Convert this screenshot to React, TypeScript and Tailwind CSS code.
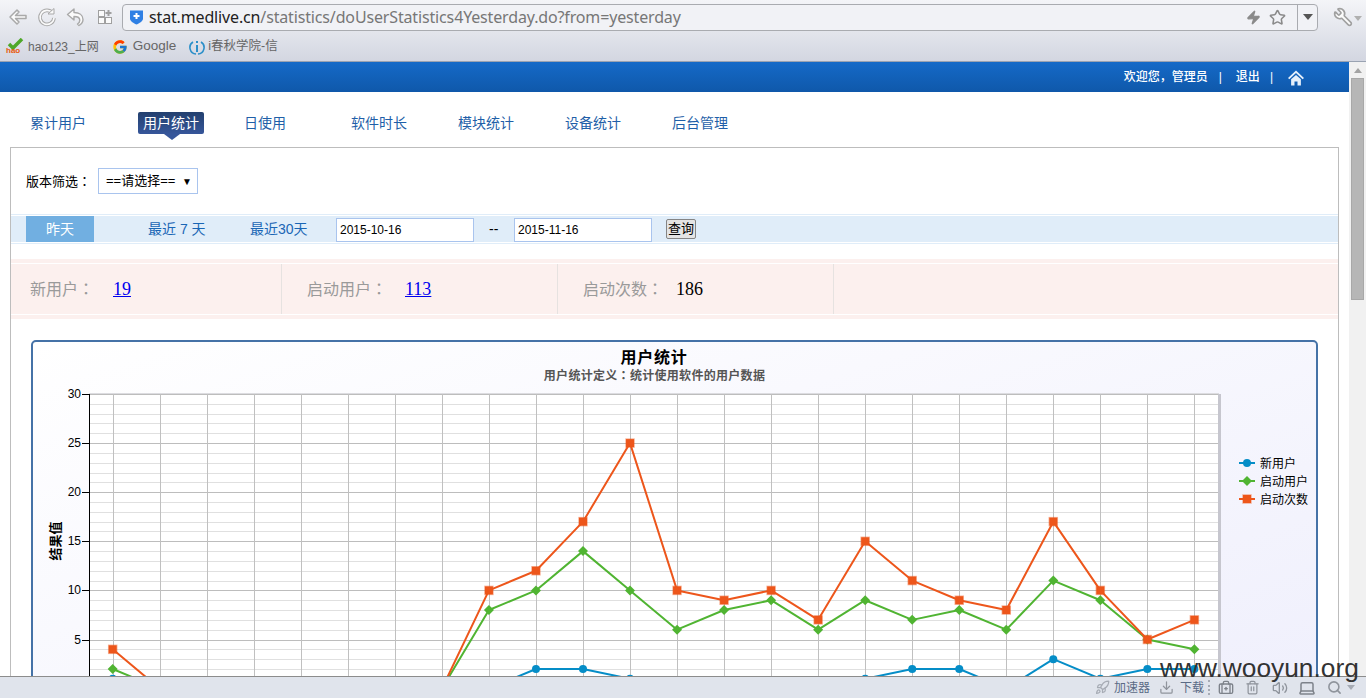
import { BriefcaseMedical, Download, Laptop, Rocket, Search, Trash2, Volume2, Zap, Star, Wrench } from 'lucide-react';
import { FcGoogle } from 'react-icons/fc';

const CJK = "[font-family:'Liberation_Sans','Noto_Sans_CJK_SC',sans-serif]";

const NAV = ['累计用户', '用户统计', '日使用', '软件时长', '模块统计', '设备统计', '后台管理'];

const SERIES = [
  { name: '新用户', color: '#058dc7', marker: 'circle', data: [1, 0, 0, 0, 0, 0, 0, 0, 0, 2, 2, 1, 0, 0, 0, 0, 1, 2, 2, 0, 3, 1, 2, 2] },
  { name: '启动用户', color: '#50b432', marker: 'diamond', data: [2, 0, 0, 0, 0, 0, 0, 0, 8, 10, 14, 10, 6, 8, 9, 6, 9, 7, 8, 6, 11, 9, 5, 4] },
  { name: '启动次数', color: '#ed561b', marker: 'square', data: [4, 0, 0, 0, 0, 0, 0, 0, 10, 12, 17, 25, 10, 9, 10, 7, 15, 11, 9, 8, 17, 10, 5, 7] },
];

const px = (i: number) => 112.7 + i * 47.03;
const py = (v: number) => 688.6 - v * 9.82;
// grid lines sit on whole pixels, otherwise they blur
const snap = (n: number) => Math.round(n) + 0.5;

function Marker({ kind, x, y, color }: { kind: string; x: number; y: number; color: string }) {
  if (kind === 'circle') return <circle cx={x} cy={y} r={4} fill={color} />;
  if (kind === 'diamond') return <path d={`M${x} ${y - 5}L${x + 5} ${y}L${x} ${y + 5}L${x - 5} ${y}Z`} fill={color} />;
  return <rect x={x - 4} y={y - 4} width={8} height={8} fill={color} stroke={color} strokeOpacity={0.45} strokeWidth={1.5} />;
}

function Colon() {
  return <span className="[font-family:'Noto_Sans_CJK_TC',sans-serif]">：</span>;
}

function Chart() {
  const font = "'Liberation Sans','Noto Sans CJK SC',sans-serif";
  return (
    <svg viewBox="33 342 1283 420" width={1283} height={420} fontFamily={font} className="block">
      <text x={654} y={363} textAnchor="middle" fontSize={16} letterSpacing={0.7} fontWeight={700} fill="#000">用户统计</text>
      <text x={654.5} y={380} textAnchor="middle" fontSize={12} letterSpacing={0.3} fontWeight={700} fill="#555">
        用户统计定义<tspan fontFamily="'Noto Sans CJK TC',sans-serif">：</tspan>统计使用软件的用户数据
      </text>
      <rect x={1218} y={394} width={3} height={320} fill="#c6c6ce" />
      <rect x={89} y={393} width={1130} height={1} fill="#dcdce0" />
      <rect x={89} y={394} width={1129} height={320} fill="#fff" />
      {Array.from({ length: 31 }, (_, v) => (
        <line key={v} x1={89} x2={1218} y1={snap(py(v))} y2={snap(py(v))} stroke={v % 5 === 0 ? '#bdbdbd' : '#e0e0e0'} strokeWidth={1} />
      ))}
      {SERIES[0].data.map((_, i) => (
        <line key={i} x1={snap(px(i))} x2={snap(px(i))} y1={394} y2={714} stroke="#c0c0c0" strokeWidth={1} />
      ))}
      <line x1={89.5} x2={89.5} y1={394} y2={714} stroke="#000" strokeWidth={1} />
      {[30, 25, 20, 15, 10, 5].map((v) => (
        <g key={v}>
          <line x1={82} x2={89} y1={snap(py(v))} y2={snap(py(v))} stroke="#000" strokeWidth={1} />
          <text x={81} y={py(v) + 4} textAnchor="end" fontSize={12} fill="#000">{v}</text>
        </g>
      ))}
      <text transform="translate(60 541) rotate(-90)" textAnchor="middle" fontSize={13} fontWeight={700} fill="#000">结果值</text>
      {SERIES.map((s) => (
        <g key={s.name}>
          <polyline points={s.data.map((v, i) => `${px(i)},${py(v)}`).join(' ')} fill="none" stroke={s.color} strokeWidth={2} strokeLinejoin="round" />
          {s.data.map((v, i) => <Marker key={i} kind={s.marker} x={px(i)} y={py(v)} color={s.color} />)}
        </g>
      ))}
      {SERIES.map((s, i) => (
        <g key={s.name}>
          <line x1={1239} x2={1255} y1={463 + i * 18} y2={463 + i * 18} stroke={s.color} strokeWidth={2} />
          <Marker kind={s.marker} x={1247} y={463 + i * 18} color={s.color} />
          <text x={1260} y={467.5 + i * 18} fontSize={12} fill="#000">{s.name}</text>
        </g>
      ))}
    </svg>
  );
}

function BrowserBar() {
  return (
    <div className="h-[62px] shrink-0 bg-linear-to-b from-[#f4f5f8] to-[#d3d6e1] border-b border-[#9aa3b2]">
      <div className="h-[34px] flex items-center pl-[8px]">
        <svg width="20" height="20" viewBox="0 0 20 20" fill="#fbfbfb" stroke="#a9a9a9" strokeWidth="1.5" strokeLinejoin="round">
          <path d="M2 10l7-7 2 2-3.5 3.5H18v3H7.5L11 15l-2 2z" />
        </svg>
        <svg width="20" height="20" viewBox="0 0 20 20" fill="none" className="ml-[9px]">
          <path d="M15.5 6a7 7 0 1 0 1.5 5" stroke="#a9a9a9" strokeWidth="3.6" />
          <path d="M15.5 6a7 7 0 1 0 1.5 5" stroke="#fbfbfb" strokeWidth="1.6" />
          <path d="M11 7h6V1.5z" fill="#fbfbfb" stroke="#a9a9a9" strokeLinejoin="round" />
        </svg>
        <svg width="20" height="20" viewBox="0 0 20 20" fill="#fbfbfb" stroke="#a9a9a9" strokeWidth="1.4" strokeLinejoin="round" className="ml-[9px]">
          <path d="M1.5 7.5L8 2v3.5c5 0 9 2.500 9 7 0 2.500-1.500 4.500-4 6l-1.500-1.500c1.500-1 2.300-2.300 2.300-3.800 0-2.500-2.800-3.700-5.800-3.700V13z" />
        </svg>
        <svg width="16" height="16" viewBox="0 0 16 16" fill="#fbfbfb" stroke="#a0a0a0" className="ml-[11px]">
          <rect x="1.500" y="1.500" width="6" height="6" /><rect x="1.500" y="8.500" width="6" height="6" /><rect x="8.500" y="8.500" width="6" height="6" />
          <path d="M11.500 1v6M8.500 4h6" strokeWidth="2" />
        </svg>
        <div className="ml-[9px] w-[1196px] h-[27px] rounded-[4px] border border-[#a9abb0] bg-[#f1f2f6] flex items-center pl-[6px]">
          <svg width="15" height="16" viewBox="0 0 15 16">
            <path d="M1 1.500h13v8c0 2.500-3 4.500-6.500 6C4 14 1 12 1 9.500z" fill="#2f80e4" />
            <path d="M7.500 4v6M4.500 7h6" stroke="#fff" strokeWidth="2" />
          </svg>
          <div className="ml-[5px] text-[16px] whitespace-nowrap [font-family:'Noto_Sans',sans-serif] tracking-[-0.15px] text-[#222]">
            stat.medlive.cn<span className="text-[#777]">/statistics/doUserStatistics4Yesterday.do?from=yesterday</span>
          </div>
          <div className="ml-auto flex items-center h-full">
            <Zap size={15} fill="#8a8a8a" stroke="#8a8a8a" />
            <Star size={17} stroke="#8a8a8a" strokeWidth={2.2} className="ml-[8px] mr-[11px]" />
            <div className="h-full w-[20px] border-l border-[#a9abb0] flex items-center justify-center">
              <div className="w-0 h-0 border-x-[5px] border-x-transparent border-t-[6px] border-t-[#555]" />
            </div>
          </div>
        </div>
        <Wrench size={20} fill="#fbfbfb" stroke="#a0a0a0" className="ml-[15px] -scale-x-100" />
        <div className="ml-[1px] mt-[3px] w-0 h-0 border-x-[4px] border-x-transparent border-t-[5px] border-t-[#b0b0b0]" />
      </div>
      <div className={`h-[25px] flex items-center pl-[6px] text-[12px] text-[#666] ${CJK}`}>
        <div className="relative w-[19px] h-[17px]">
          <svg width="17" height="12" viewBox="0 0 17 12" className="absolute left-[1px] top-0">
            <path d="M2 6l4 4L15 1" fill="none" stroke="#4fa82a" strokeWidth="3.5" />
          </svg>
          <span className="absolute left-0 top-[8px] text-[8px] leading-[9px] font-bold text-[#e8590c]">hao</span>
        </div>
        <span className="ml-[3px]">hao123_上网</span>
        <FcGoogle size={16} className="ml-[13px]" />
        <span className="ml-[5px] text-[13.5px]">Google</span>
        <svg width="16" height="16" viewBox="0 0 16 16" className="ml-[13px]" fill="none" stroke="#2b8fc9">
          <path d="M4 3a6.500 6.500 0 0 0 3 12M12 3a6.500 6.500 0 0 1-3 12" strokeWidth="1.600" />
          <path d="M8 6v7" strokeWidth="2" /><path d="M8 2v2" strokeWidth="2" />
        </svg>
        <span className="ml-[3px] text-[12.5px]">i春秋学院-信</span>
      </div>
    </div>
  );
}

function PageHeader() {
  return (
    <div className="h-[30px] bg-linear-to-b from-[#156ac8] to-[#0f58aa] flex items-center justify-end text-white text-[12px] font-medium pr-[45px]">
      <span>欢迎您，管理员</span>
      <span className="ml-[11px] font-normal">|</span>
      <span className="ml-[14px]">退出</span>
      <span className="ml-[10px] font-normal">|</span>
      <svg width="16" height="16" viewBox="0 0 18 17" className="ml-[15px] mt-[2px]" fill="#e6f0fb">
        <path d="M9 0L0 8.500l1.500 1.500L9 3l7.500 7L18 8.500z" />
        <path d="M3.500 10L9 5l5.500 5v7h-3.800v-4.500H7.300V17H3.500z" />
      </svg>
    </div>
  );
}

function Filters() {
  return (
    <>
      <div className="pt-[20px] pl-[15px] flex items-center h-[46px] text-[13px] text-black">
        <span className="w-[72px]">版本筛选<Colon /></span>
        <div className="w-[100px] h-[26px] border border-[#a9c4ee] bg-white flex items-center pl-[7px] pr-[5px] justify-between">
          <span>==请选择==</span>
          <span className="text-[10px]">▼</span>
        </div>
      </div>
      <div className="mt-[20px] border-y border-[#e0edf9] py-px">
        <div className="h-[26px] bg-[#e0edf9] flex pl-[15px] text-[14px] text-[#1a66b5]">
          <div className="w-[68px] bg-[#71afe1] text-white flex items-center justify-center">昨天</div>
          <a className="ml-[54px] w-[59px] leading-[26px] whitespace-nowrap">最近 7 天</a>
          <a className="ml-[43px] w-[59px] leading-[26px] whitespace-nowrap">最近30天</a>
          <div className="ml-[27px] mt-[2px] w-[138px] h-[24px] border border-[#a9c4ee] bg-white pl-[3px] text-[12px] leading-[23px] text-black">2015-10-16</div>
          <div className="w-[40px] pl-[15px] text-black leading-[26px]">--</div>
          <div className="mt-[2px] w-[138px] h-[24px] border border-[#a9c4ee] bg-white pl-[3px] text-[12px] leading-[23px] text-black">2015-11-16</div>
          <div className="ml-[14px] mt-[3px] w-[30px] h-[20px] border border-[#858585] rounded-[2px] bg-[#e4e4e4] text-[13px] leading-[18px] text-center text-black">查询</div>
        </div>
      </div>
    </>
  );
}

function Stats() {
  return (
    <div className="mt-[15px] border-y-4 border-[#fcf0ee] py-px">
      <div className="h-[50px] bg-[#fcf0ee] flex items-center text-[16px] text-[#9a9a9a]">
        <div className="w-[271px] h-full border-r border-[#e6e2e0] flex items-center pl-[19px]">
          <span className="w-[83px]">新用户<Colon /></span>
          <a className="text-[18px] [font-family:'Liberation_Serif',serif] text-[#0000ee] underline">19</a>
        </div>
        <div className="w-[276px] h-full border-r border-[#e6e2e0] flex items-center pl-[25px]">
          <span className="w-[98px]">启动用户<Colon /></span>
          <a className="text-[18px] [font-family:'Liberation_Serif',serif] text-[#0000ee] underline">113</a>
        </div>
        <div className="w-[276px] h-full border-r border-[#e6e2e0] flex items-center pl-[25px]">
          <span className="w-[93px] whitespace-nowrap">启动次数<Colon /></span>
          <span className="text-[18px] [font-family:'Liberation_Serif',serif] text-black">186</span>
        </div>
      </div>
    </div>
  );
}

function StatusBar() {
  return (
    <div className={`h-[22px] shrink-0 bg-[#e0e4ec] border-t border-[#8c8c8c] flex items-center pl-[1095px] text-[12px] text-[#5a6a85] ${CJK}`}>
      <Rocket size={15} stroke="#a6abb4" />
      <span className="ml-[4px]">加速器</span>
      <Download size={15} stroke="#8f949c" className="ml-[9px]" />
      <span className="ml-[6px]">下载</span>
      <div className="ml-[4px] h-[15px] border-l-2 border-dotted border-[#a6abb4]" />
      <BriefcaseMedical size={16} stroke="#7d828a" className="ml-[8px]" />
      <Trash2 size={15} stroke="#8f949c" className="ml-[11px]" />
      <Volume2 size={16} stroke="#8f949c" className="ml-[12px]" />
      <Laptop size={18} stroke="#7d828a" className="ml-[10px]" />
      <Search size={15} stroke="#8f949c" strokeWidth={2.5} className="ml-[11px]" />
      <div className="ml-[5px] w-0 h-0 border-x-[4px] border-x-transparent border-t-[5px] border-t-[#a6abb4]" />
    </div>
  );
}

export default function App() {
  return (
    <div className={`relative w-[1366px] h-[698px] flex flex-col overflow-hidden bg-white ${CJK}`}>
      <BrowserBar />
      <div className="flex-1 min-h-0 flex">
        <div className="w-[1349px] overflow-hidden">
          <PageHeader />
          <div className="h-[55px] pt-[20px] pl-[30px] flex text-[14px] text-[#1f5fa8]">
            {NAV.map((n, i) => (
              <div key={n} className={i === 0 ? 'w-[108px]' : i === 1 ? 'w-[106px]' : 'w-[107px]'}>
                {n === '用户统计' ? (
                  <div className="relative inline-block h-[22px] leading-[22px] px-[5px] rounded-[2px] bg-linear-to-b from-[#23406f] to-[#36569a] text-white">
                    {n}
                    <div className="absolute left-[26px] top-[22px] w-0 h-0 border-x-[8px] border-x-transparent border-t-[6px] border-t-[#36569a]" />
                  </div>
                ) : <div className="h-[22px] leading-[22px]">{n}</div>}
              </div>
            ))}
          </div>
          <div className="ml-[10px] w-[1329px] border border-[#bdbdbd]">
            <Filters />
            <Stats />
            <div className="mt-[21px] ml-[20px] w-[1287px] h-[424px] border-2 border-[#4572a7] rounded-[5px] bg-linear-to-br from-white to-[#eeeefc]">
              <Chart />
            </div>
          </div>
        </div>
        <div className="w-[17px] bg-[#f1f1f1] flex flex-col items-center">
          <div className="mt-[6px] w-0 h-0 border-x-[4px] border-x-transparent border-b-[5px] border-b-[#a3a3a3]" />
          <div className="mt-[5px] w-[13px] h-[222px] bg-[#b6b6b6] border border-[#a8a8a8]" />
        </div>
      </div>
      <StatusBar />
      <div className="absolute left-[1160px] top-[653px] text-[26.3px] leading-[30px] [font-family:'Liberation_Sans',sans-serif] text-[#333] whitespace-nowrap">www.wooyun.org</div>
    </div>
  );
}
